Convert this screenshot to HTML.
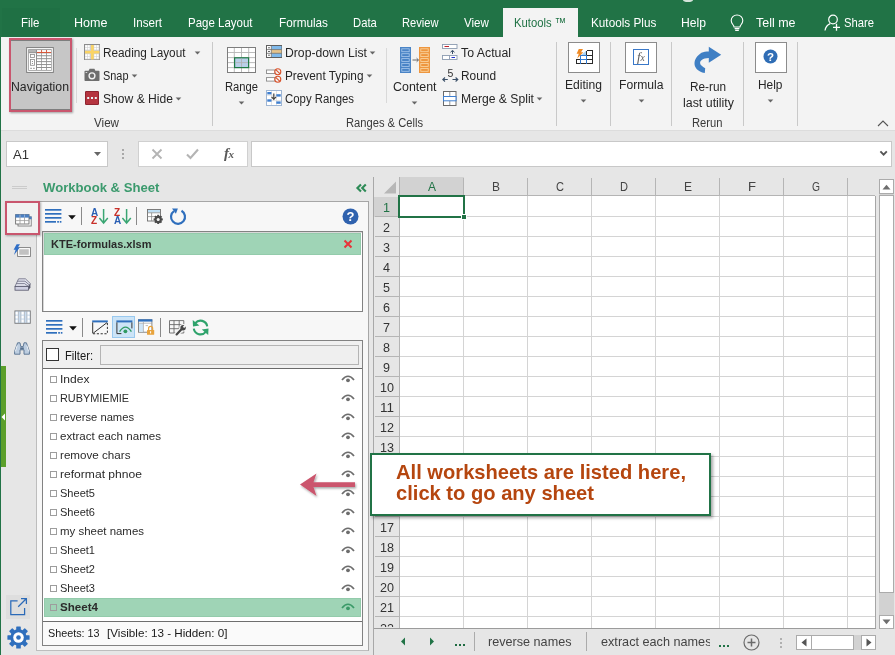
<!DOCTYPE html>
<html><head><meta charset="utf-8"><title>Excel</title>
<style>
html,body{margin:0;padding:0;}
body{width:895px;height:655px;overflow:hidden;background:#e6e6e6;font-family:"Liberation Sans",sans-serif;}
#root{position:relative;width:895px;height:655px;overflow:hidden;background:#e6e6e6;}
#root div,#root svg,#root span{position:absolute;box-sizing:border-box;}
.t{white-space:pre;transform-origin:0 50%;}

</style></head>
<body>
<div id="root">
<!-- ===== header / ribbon backgrounds ===== -->
<div style="left:0;top:0;width:895px;height:37.6px;background:#217346"></div>
<div style="left:2px;top:7.5px;width:58px;height:30.1px;background:#1f7044"></div>
<div style="left:683px;top:-3px;width:10px;height:4.6px;border-radius:50%;background:#d5e3da"></div>
<div style="left:0;top:37px;width:895px;height:94px;background:#f3f3f3;border-bottom:1px solid #dcdcdc"></div>
<div style="left:502.5px;top:7.5px;width:75.5px;height:31px;background:#f3f3f3"></div>
<div style="left:0;top:37px;width:1.3px;height:618px;background:#217346"></div>
<div style="left:1.3px;top:366.2px;width:4.8px;height:100.5px;background:#5b9f2b"></div>
<svg style="left:1px;top:412.6px" width="5" height="8" viewBox="0 0 5 8"><path d="M4 0.5 L0.5 4 L4 7.5Z" fill="#fff"/></svg>

<!-- ribbon separators -->
<div style="left:76px;top:48px;width:1px;height:55px;background:#d9d9d9"></div>
<div style="left:212px;top:42px;width:1px;height:84px;background:#c9c9c9"></div>
<div style="left:386px;top:48px;width:1px;height:55px;background:#d9d9d9"></div>
<div style="left:556px;top:42px;width:1px;height:84px;background:#c9c9c9"></div>
<div style="left:610px;top:42px;width:1px;height:84px;background:#c9c9c9"></div>
<div style="left:671px;top:42px;width:1px;height:84px;background:#c9c9c9"></div>
<div style="left:743px;top:42px;width:1px;height:84px;background:#c9c9c9"></div>
<div style="left:797px;top:42px;width:1px;height:84px;background:#c9c9c9"></div>

<!-- Navigation button -->
<div style="left:9px;top:37.6px;width:63px;height:74px;background:#c6c6c6;border:2px solid #c9566e;box-shadow:1px 1px 2px rgba(0,0,0,.35)"></div>
<div style="left:11px;top:39.6px;width:59px;height:1px;background:#7e7e7e"></div>
<div style="left:11px;top:108.8px;width:59px;height:1px;background:#7e7e7e"></div>
<svg style="left:26px;top:47px" width="28" height="26" viewBox="0 0 28 26">
<rect x="0.65" y="0.6" width="26.7" height="24.8" fill="#fff" stroke="#7a7a7a" stroke-width=".95"/>
<rect x="2.2" y="2.2" width="23.5" height="21.5" fill="#8f8f8f"/>
<rect x="2.9" y="2.9" width="7.1" height="2.4" fill="#b4b4b4"/>
<g fill="#fff"><rect x="11" y="3.1" width="4.2" height="1.9"/><rect x="11" y="6.30" width="4.2" height="1.95"/><rect x="11" y="9.24" width="4.2" height="1.95"/><rect x="11" y="12.18" width="4.2" height="1.95"/><rect x="11" y="15.12" width="4.2" height="1.95"/><rect x="11" y="18.06" width="4.2" height="1.95"/><rect x="11" y="21.00" width="4.2" height="1.95"/><rect x="15.9" y="3.1" width="4.2" height="1.9"/><rect x="15.9" y="6.30" width="4.2" height="1.95"/><rect x="15.9" y="9.24" width="4.2" height="1.95"/><rect x="15.9" y="12.18" width="4.2" height="1.95"/><rect x="15.9" y="15.12" width="4.2" height="1.95"/><rect x="15.9" y="18.06" width="4.2" height="1.95"/><rect x="15.9" y="21.00" width="4.2" height="1.95"/><rect x="20.9" y="3.1" width="4.2" height="1.9"/><rect x="20.9" y="6.30" width="4.2" height="1.95"/><rect x="20.9" y="9.24" width="4.2" height="1.95"/><rect x="20.9" y="12.18" width="4.2" height="1.95"/><rect x="20.9" y="15.12" width="4.2" height="1.95"/><rect x="20.9" y="18.06" width="4.2" height="1.95"/><rect x="20.9" y="21.00" width="4.2" height="1.95"/><rect x="2.9" y="6.2" width="7.1" height="16.8"/></g>
<path d="M10.9 5.45 H25.1" stroke="#e2502f" stroke-width=".9"/>
<path d="M15.55 3 V5.6 M20.5 3 V5.6" stroke="#e2502f" stroke-width=".75"/>
<rect x="4.4" y="7.5" width="4" height="3" fill="#fff" stroke="#8a8a8a" stroke-width=".8"/>
<rect x="4.4" y="12.5" width="4" height="5.8" fill="#fff" stroke="#8a8a8a" stroke-width=".8"/>
<rect x="5.9" y="14" width="1" height="1" fill="#8a8a8a"/><rect x="5.9" y="16" width="1" height="1" fill="#8a8a8a"/>
<path d="M4.2 21.3 H6 M7 21.3 H8.8" stroke="#8a8a8a" stroke-width=".9"/>
</svg>
<svg style="left:84px;top:44px" width="16" height="16" viewBox="0 0 16 16">
<rect x="0.5" y="0.5" width="15.4" height="15.4" fill="#cfcfcf" stroke="#8c8c8c"/>
<g fill="#fff"><rect x="1.2" y="1.2" width="2" height="2"/><rect x="1.2" y="3.7" width="2" height="2"/><rect x="3.7" y="1.2" width="2" height="2"/><rect x="3.7" y="3.7" width="2" height="2"/><rect x="1.2" y="10.2" width="2" height="2"/><rect x="1.2" y="12.7" width="2" height="2"/><rect x="3.7" y="10.2" width="2" height="2"/><rect x="3.7" y="12.7" width="2" height="2"/><rect x="10.2" y="1.2" width="2" height="2"/><rect x="10.2" y="3.7" width="2" height="2"/><rect x="12.7" y="1.2" width="2" height="2"/><rect x="12.7" y="3.7" width="2" height="2"/><rect x="10.2" y="10.2" width="2" height="2"/><rect x="10.2" y="12.7" width="2" height="2"/><rect x="12.7" y="10.2" width="2" height="2"/><rect x="12.7" y="12.7" width="2" height="2"/></g>
<rect x="7.05" y="1" width="2.7" height="14.4" fill="#fad466"/>
<rect x="1" y="6.85" width="14.4" height="2.6" fill="#fad466"/>
</svg>
<svg style="left:84px;top:68px" width="16" height="14" viewBox="0 0 16 14">
<path d="M0.5 3.5 Q0.5 2.8 1.2 2.8 H4.6 L5.6 0.8 H10.4 L11.4 2.8 H14.8 Q15.5 2.8 15.5 3.5 V12.3 Q15.5 13 14.8 13 H1.2 Q0.5 13 0.5 12.3Z" fill="#6e6e6e"/>
<circle cx="8" cy="7.8" r="3.6" fill="#f3f3f3"/><circle cx="8" cy="7.8" r="2.2" fill="#6e6e6e"/>
<rect x="1.6" y="4" width="1.6" height="1" fill="#d8d8d8"/>
</svg>
<svg style="left:85px;top:91px" width="14" height="14" viewBox="0 0 14 14">
<rect x="0.5" y="0.5" width="13" height="13" rx=".3" fill="#b5343f" stroke="#8e2430"/>
<rect x="2.2" y="6" width="2" height="2" fill="#e8f6f8"/><rect x="6" y="6" width="2" height="2" fill="#e8f6f8"/><rect x="9.8" y="6" width="2" height="2" fill="#e8f6f8"/>
</svg>
<svg style="left:193.5px;top:50.5px" width="7" height="4" viewBox="0 0 7 4"><path d="M0.7 0.4 H6.3 L3.5 3.5Z" fill="#666"/></svg>
<svg style="left:131.0px;top:73.5px" width="7" height="4" viewBox="0 0 7 4"><path d="M0.7 0.4 H6.3 L3.5 3.5Z" fill="#666"/></svg>
<svg style="left:175.0px;top:96.5px" width="7" height="4" viewBox="0 0 7 4"><path d="M0.7 0.4 H6.3 L3.5 3.5Z" fill="#666"/></svg>
<svg style="left:227px;top:47px" width="29" height="26" viewBox="0 0 29 26">
<rect x="0.5" y="0.5" width="28" height="25" fill="#fff" stroke="#7d7d7d"/>
<path d="M7.3 1 V25 M14.5 1 V25 M21.7 1 V25 M1 5.5 H28 M1 10.6 H28 M1 15.6 H28 M1 20.6 H28" stroke="#b4b4b4" stroke-width=".9"/>
<rect x="7.6" y="10.8" width="14" height="9.8" fill="#b9cfe9" stroke="#1f7a45" stroke-width="1.2"/>
<path d="M14.5 11.5 V20 M8.3 15.6 H21" stroke="#b0b0b0" stroke-width=".8"/>
</svg>
<svg style="left:238.0px;top:100.5px" width="7" height="4" viewBox="0 0 7 4"><path d="M0.7 0.4 H6.3 L3.5 3.5Z" fill="#666"/></svg>
<svg style="left:266px;top:45px" width="16" height="13" viewBox="0 0 16 13">
<rect x="0.5" y="0.5" width="15" height="12" fill="#fff" stroke="#5f5f5f"/>
<rect x="5.5" y="1" width="10" height="3.6" fill="#7fb9ea"/><rect x="5.5" y="4.7" width="10" height="3.6" fill="#e5c48c"/><rect x="5.5" y="8.4" width="10" height="3.6" fill="#7fb9ea"/>
<path d="M5.3 1 V12 M1 4.6 H15 M1 8.3 H15" stroke="#6a6a6a" stroke-width=".8"/>
<path d="M2.2 2.8 H3.8 M2.2 6.5 H3.8 M2.2 10.2 H3.8" stroke="#444" stroke-width="1"/>
</svg>
<svg style="left:369.0px;top:50.5px" width="7" height="4" viewBox="0 0 7 4"><path d="M0.7 0.4 H6.3 L3.5 3.5Z" fill="#666"/></svg>
<svg style="left:266px;top:68px" width="17" height="15" viewBox="0 0 17 15">
<rect x="0.5" y="2" width="8.5" height="3.5" fill="#fff" stroke="#8a8a8a" stroke-width=".9"/>
<rect x="0.5" y="9.6" width="8.5" height="3.5" fill="#fff" stroke="#8a8a8a" stroke-width=".9"/>
<circle cx="11.8" cy="3.7" r="3" fill="#f3f3f3" stroke="#d9532c" stroke-width="1.1"/><path d="M9.7 1.7 L13.9 5.7" stroke="#d9532c" stroke-width="1.1"/>
<circle cx="11.8" cy="11.3" r="3" fill="#f3f3f3" stroke="#d9532c" stroke-width="1.1"/><path d="M9.7 9.3 L13.9 13.3" stroke="#d9532c" stroke-width="1.1"/>
</svg>
<svg style="left:366.0px;top:73.5px" width="7" height="4" viewBox="0 0 7 4"><path d="M0.7 0.4 H6.3 L3.5 3.5Z" fill="#666"/></svg>
<svg style="left:266px;top:90px" width="16" height="16" viewBox="0 0 16 16">
<rect x="0.5" y="0.5" width="15" height="15" fill="#fff" stroke="#9fb6d4"/>
<path d="M1 5.3 H15 M1 10.6 H15 M5.5 1 V15 M10.5 1 V15" stroke="#d8d8d8" stroke-width=".7"/>
<rect x="1.3" y="2" width="4.2" height="2.4" fill="#3f7fd0"/><rect x="10.3" y="4.2" width="4.4" height="2.4" fill="#3f7fd0"/>
<rect x="1.3" y="9.3" width="4.2" height="2.4" fill="#3f7fd0"/><rect x="10.3" y="11.4" width="4.4" height="2.4" fill="#3f7fd0"/>
<path d="M7.8 3.5 V8.6 M5.6 6.8 L7.8 9.4 L10 6.8" stroke="#444" stroke-width="1.2" fill="none"/>
</svg>
<svg style="left:400px;top:47px" width="11" height="26" viewBox="0 0 11 26"><rect width="11" height="26" fill="#4a84c6"/><rect x="1.8" y="1.8" width="7.4" height="2.9" fill="none" stroke="#a8c8ec" stroke-width=".8"/><rect x="1.8" y="6.7" width="7.4" height="2.9" fill="none" stroke="#a8c8ec" stroke-width=".8"/><rect x="1.8" y="11.600000000000001" width="7.4" height="2.9" fill="none" stroke="#a8c8ec" stroke-width=".8"/><rect x="1.8" y="16.5" width="7.4" height="2.9" fill="none" stroke="#a8c8ec" stroke-width=".8"/><rect x="1.8" y="21.400000000000002" width="7.4" height="2.9" fill="none" stroke="#a8c8ec" stroke-width=".8"/></svg>
<svg style="left:419px;top:47px" width="11" height="26" viewBox="0 0 11 26"><rect width="11" height="26" fill="#ee963f"/><rect x="1.8" y="1.8" width="7.4" height="2.9" fill="none" stroke="#fad7a6" stroke-width=".8"/><rect x="1.8" y="6.7" width="7.4" height="2.9" fill="none" stroke="#fad7a6" stroke-width=".8"/><rect x="1.8" y="11.600000000000001" width="7.4" height="2.9" fill="none" stroke="#fad7a6" stroke-width=".8"/><rect x="1.8" y="16.5" width="7.4" height="2.9" fill="none" stroke="#fad7a6" stroke-width=".8"/><rect x="1.8" y="21.400000000000002" width="7.4" height="2.9" fill="none" stroke="#fad7a6" stroke-width=".8"/></svg>
<svg style="left:411.5px;top:56.5px" width="8" height="6" viewBox="0 0 8 6"><path d="M0.5 3 H6.3 M4.6 1.2 L6.5 3 L4.6 4.8" stroke="#444" stroke-width=".8" fill="none"/></svg>
<svg style="left:411.0px;top:100.5px" width="7" height="4" viewBox="0 0 7 4"><path d="M0.7 0.4 H6.3 L3.5 3.5Z" fill="#666"/></svg>
<svg style="left:442px;top:44px" width="16" height="16" viewBox="0 0 16 16">
<rect x="0.5" y="0.5" width="14.5" height="4" fill="#fff" stroke="#8c9bb0" stroke-width=".9"/>
<path d="M2.5 2.5 H7" stroke="#c0202a" stroke-width="1"/>
<path d="M10.5 10 V6.8 M8.6 8.4 L10.5 6.2 L12.4 8.4" stroke="#3b5068" stroke-width="1" fill="none"/>
<rect x="0.5" y="11.5" width="14.5" height="4" fill="#fff" stroke="#8c9bb0" stroke-width=".9"/>
<path d="M7.5 11.5 V15.5" stroke="#8c9bb0" stroke-width=".9"/><path d="M9.5 13.5 H13" stroke="#2030d0" stroke-width="1"/>
</svg>
<svg style="left:442px;top:68px;will-change:transform" width="17" height="15" viewBox="0 0 17 15">
<text x="5.6" y="9.4" font-family="Liberation Sans" font-size="10.5" fill="#333">5</text>
<path d="M0.8 11.5 H5.8 M3 9.5 L0.8 11.5 L3 13.5 M10.5 11.5 H15.8 M13.6 9.5 L15.8 11.5 L13.6 13.5" stroke="#3b5068" stroke-width="1.1" fill="none"/>
</svg>
<svg style="left:443px;top:91px" width="14" height="15" viewBox="0 0 14 15">
<rect x="0.5" y="0.5" width="12.5" height="14" fill="#fff" stroke="#6a6a6a"/>
<path d="M6.8 1 V5.5 M6.8 10 V14" stroke="#8a8a8a" stroke-width=".9"/>
<rect x="0.5" y="5.5" width="12.5" height="4.3" fill="#fff" stroke="#3f7fd0" stroke-width="1"/>
</svg>
<svg style="left:535.5px;top:96.5px" width="7" height="4" viewBox="0 0 7 4"><path d="M0.7 0.4 H6.3 L3.5 3.5Z" fill="#666"/></svg>
<div style="left:568px;top:42px;width:32px;height:31px;background:#fff;border:1px solid #8c8c8c"></div>
<svg style="left:576px;top:49px" width="17" height="16" viewBox="0 0 17 16">
<path d="M4.5 6.5 L10.5 1.5 V6.5Z" fill="#a9d2f2"/>
<path d="M10.5 1.5 H16 V14.5 H0.5 V10.5 H4.5 M10.5 6 H16 M10.5 10.5 H16 M10.5 1.5 V5.5" stroke="#2a2a2a" stroke-width="1" fill="none" shape-rendering="crispEdges"/>
<path d="M4.5 6 H10.5 V14.5 M4.5 6 V14.5 M4.5 10.5 H10.5" stroke="#2f79d0" stroke-width="1" fill="none" shape-rendering="crispEdges"/>
<path d="M2.8 0 H7 L5 3.2 H7.4 L1.2 9.4 L2.8 4.8 H0.6Z" fill="#f08a24"/>
</svg>
<svg style="left:580.0px;top:98.5px" width="7" height="4" viewBox="0 0 7 4"><path d="M0.7 0.4 H6.3 L3.5 3.5Z" fill="#666"/></svg>
<div style="left:625px;top:42px;width:32px;height:31px;background:#fff;border:1px solid #8c8c8c"></div>
<div style="left:633px;top:49.3px;width:15.7px;height:15.4px;background:#fff;border:1px solid #3a78c8"></div>
<svg style="left:635px;top:49px;filter:grayscale(1)" width="14" height="16" viewBox="0 0 14 16"><text x="2" y="11.5" font-family="Liberation Serif" font-style="italic" font-size="13" fill="#5a5a5a">f</text><text x="5.6" y="11.5" font-family="Liberation Serif" font-style="italic" font-size="9.5" fill="#5a5a5a">x</text></svg>
<svg style="left:638.0px;top:98.5px" width="7" height="4" viewBox="0 0 7 4"><path d="M0.7 0.4 H6.3 L3.5 3.5Z" fill="#666"/></svg>
<svg style="left:694px;top:46px" width="28" height="28" viewBox="0 0 28 28">
<path d="M14.8 0.7 L27.2 8.8 L14.8 16.8 L14.8 12.1 C11.5 12.3 9.5 12.8 8.1 13.7 C6.6 14.7 6.1 15.8 6.1 16.8 C6.1 18 6.6 18.9 7.45 19.5 C8.5 20.6 9.8 21.5 11.2 22.2 L10.8 27.1 C8.8 26.7 7.4 26.2 6.1 25.5 C4.4 24.6 3 23.5 2.1 22.2 C1 20.8 0.5 19.2 0.5 17.5 C0.5 15.5 1.1 13.7 2.1 12.1 C3.3 10 5.2 8.2 7.45 6.75 C9.5 5.8 12 5.4 14.8 5.4Z" fill="#3f7fc4"/>
</svg>
<div style="left:755px;top:42px;width:32px;height:31px;background:#fff;border:1px solid #8c8c8c"></div>
<svg style="left:763.4px;top:49px;will-change:transform" width="15" height="15" viewBox="0 0 15 15"><circle cx="7.5" cy="7.5" r="7" fill="#2f6db5"/><text x="7.5" y="11.6" text-anchor="middle" font-family="Liberation Sans" font-weight="bold" font-size="11.5" fill="#fff">?</text></svg>
<svg style="left:767.0px;top:98.5px" width="7" height="4" viewBox="0 0 7 4"><path d="M0.7 0.4 H6.3 L3.5 3.5Z" fill="#666"/></svg>
<svg style="left:877px;top:119.5px" width="12" height="7" viewBox="0 0 12 7"><path d="M1 6 L6 1 L11 6" stroke="#555" stroke-width="1.1" fill="none"/></svg>
<svg style="left:730px;top:14px" width="14" height="18" viewBox="0 0 14 18">
<path d="M7 1 C3.6 1 1.2 3.5 1.2 6.6 C1.2 9 2.8 10.2 3.6 11.6 L4 13 H10 L10.4 11.6 C11.2 10.2 12.8 9 12.8 6.6 C12.8 3.5 10.4 1 7 1Z" fill="none" stroke="#fff" stroke-width="1.1"/>
<path d="M4.6 14.6 H9.4 M5.2 16.4 H8.8" stroke="#fff" stroke-width="1.1"/></svg>
<svg style="left:824px;top:14px" width="17" height="18" viewBox="0 0 17 18">
<circle cx="9" cy="5.5" r="4.3" fill="none" stroke="#fff" stroke-width="1.2"/>
<path d="M1 16.5 C1.6 12.8 3.6 10.6 6.2 9.6" fill="none" stroke="#fff" stroke-width="1.2"/>
<path d="M12.5 9.8 V16.8 M9 13.3 H16" stroke="#fff" stroke-width="1.3"/></svg>

<!-- ===== formula bar ===== -->
<div style="left:6px;top:141px;width:101.5px;height:25.5px;background:#fff;border:1px solid #c8c8c8"></div>
<svg style="left:93px;top:151px" width="9" height="6" viewBox="0 0 9 6"><path d="M1 1 L8 1 L4.5 5Z" fill="#666"/></svg>
<div style="left:122px;top:149px;width:2px;height:2px;background:#a8a8a8"></div>
<div style="left:122px;top:153px;width:2px;height:2px;background:#a8a8a8"></div>
<div style="left:122px;top:157px;width:2px;height:2px;background:#a8a8a8"></div>
<div style="left:137.5px;top:141px;width:110px;height:25.5px;background:#fff;border:1px solid #d0d0d0"></div>
<svg style="left:150px;top:147px" width="14" height="14" viewBox="0 0 14 14"><path d="M2.5 2.5 L11.5 11.5 M11.5 2.5 L2.5 11.5" stroke="#b4b4b4" stroke-width="1.8" fill="none"/></svg>
<svg style="left:185px;top:147px" width="15" height="14" viewBox="0 0 15 14"><path d="M2 7.5 L5.5 11 L13 2.5" stroke="#b4b4b4" stroke-width="2.1" fill="none"/></svg>
<svg style="left:222px;top:145px;filter:grayscale(1)" width="16" height="18" viewBox="0 0 16 18"><text x="2" y="12.8" font-family="Liberation Serif" font-style="italic" font-weight="bold" font-size="15" fill="#5a5a5a">f</text><text x="6.6" y="12.8" font-family="Liberation Serif" font-style="italic" font-weight="bold" font-size="11" fill="#5a5a5a">x</text></svg>
<div style="left:250.5px;top:141px;width:641px;height:25.5px;background:#fff;border:1px solid #c8c8c8"></div>
<svg style="left:879px;top:150px" width="10" height="7" viewBox="0 0 10 7"><path d="M1.4 1.4 L4.6 4.6 L7.8 1.4" stroke="#555" stroke-width="1.9" fill="none"/></svg>


<!-- ===== Kutools pane ===== -->
<div style="left:12px;top:185.7px;width:15px;height:1px;background:#cbcbcb"></div>
<div style="left:12px;top:188.2px;width:15px;height:1px;background:#cbcbcb"></div>
<div style="left:35.8px;top:201px;width:333.2px;height:449.5px;background:#f7f7f7;border:1px solid #a6a6a6;border-left-color:#bdbdbd;border-bottom-color:#bdbdbd"></div>
<svg style="left:355px;top:183px" width="12" height="10" viewBox="0 0 12 10"><path d="M6 1.4 L2.4 5 L6 8.6 M10.8 1.4 L7.2 5 L10.8 8.6" stroke="#2e8b57" stroke-width="2.1" fill="none"/></svg>
<!-- selected side icon -->
<div style="left:5.2px;top:201.3px;width:34.6px;height:33.3px;background:#f1f1f1;border:2px solid #c9566e;box-shadow:1px 1px 2px rgba(0,0,0,.3)"></div>
<svg style="left:14.5px;top:213.5px" width="17" height="13" viewBox="0 0 17 13">
<rect x="3" y="2.8" width="13.2" height="9.2" fill="#fff" stroke="#7a7a7a" stroke-width=".9"/>
<rect x="14" y="2.6" width="2.6" height="2.6" fill="#4a7fc2"/>
<rect x="0.6" y="0.6" width="13.4" height="9.4" fill="#fff" stroke="#6e6e6e" stroke-width=".9"/>
<rect x="0.4" y="0.4" width="13.8" height="3.2" fill="#4a7fc2"/>
<path d="M5 0.6 V10 M9.5 0.6 V10 M0.6 6.6 H14" stroke="#9a9a9a" stroke-width=".8"/>
<path d="M5 0.6 V3.4 M9.5 0.6 V3.4" stroke="#8fb3e0" stroke-width=".8"/>
</svg>
<svg style="left:12.5px;top:244px" width="18" height="13" viewBox="0 0 18 13">
<rect x="4.6" y="3.6" width="12.8" height="8.8" fill="#fff" stroke="#7a7a7a" stroke-width=".9"/>
<rect x="6.2" y="5.2" width="9.6" height="5.6" fill="#c2c2c2"/>
<path d="M3.6 0.3 H7 L4.8 3.6 H6.8 L1 11 L2.6 5.8 H0.6Z" fill="#2f6fc8"/>
</svg>
<svg style="left:13.5px;top:277.5px" width="17" height="13" viewBox="0 0 17 13">
<path d="M4.6 0.8 H11.4 L16.4 5.6 L14.4 8.4 H1Z" fill="#e2e3ee" stroke="#6a6b80" stroke-width=".8"/>
<path d="M3.4 3.2 H11 L15.4 7 M2.2 5.6 H10.6 L14.4 8.4" stroke="#6a6b80" stroke-width=".8" fill="none"/>
<path d="M14.4 8.4 L16.4 5.6 V9.6 L14.4 12.2Z" fill="#55566a"/>
<rect x="1" y="8.4" width="13.4" height="3.8" fill="#cfd0e2" stroke="#55566a" stroke-width=".8"/>
</svg>
<svg style="left:13.5px;top:309.5px" width="17" height="14" viewBox="0 0 17 14">
<rect x="0.9" y="0.9" width="15.4" height="12.4" fill="#c9dcf0" stroke="#7a7a7a" stroke-width=".9"/>
<g fill="#fff"><rect x="1.6" y="1.8" width="2.2" height="2.8"/><rect x="1.6" y="5.7" width="2.2" height="2.8"/><rect x="1.6" y="9.6" width="2.2" height="2.8"/>
<rect x="7.4" y="1.8" width="2.4" height="2.8"/><rect x="7.4" y="5.7" width="2.4" height="2.8"/><rect x="7.4" y="9.6" width="2.4" height="2.8"/>
<rect x="13.4" y="1.8" width="2.2" height="2.8"/><rect x="13.4" y="5.7" width="2.2" height="2.8"/><rect x="13.4" y="9.6" width="2.2" height="2.8"/></g>
<path d="M4.4 1 V13 M6.8 1 V13 M10.4 1 V13 M12.8 1 V13" stroke="#a9a9a9" stroke-width=".6"/>
</svg>
<svg style="left:13.5px;top:341.5px" width="16" height="13" viewBox="0 0 16 13">
<path d="M3.6 0.8 H6 L6.8 4.6 H9.2 L10 0.8 H12.4 L15.4 9.4 V12.2 H10 V7.8 H6 V12.2 H0.6 V9.4Z" fill="#bccde0" stroke="#56708e" stroke-width=".9"/>
<path d="M3.2 3.4 L1.4 9.4 M12.8 3.4 L14.6 9.4" stroke="#eaf0f7" stroke-width="1"/>
<path d="M6.2 5.4 H9.8 V7.4 H6.2Z" fill="#56708e"/>
</svg>
<!-- toolbar 1 -->
<svg style="left:45px;top:209px" width="17" height="14" viewBox="0 0 17 14"><rect x="0" y="0" width="16.4" height="1.7" fill="#2f6fbd"/><rect x="0" y="4" width="16.4" height="1.7" fill="#2f6fbd"/><rect x="0" y="8" width="16.4" height="1.7" fill="#2f6fbd"/><rect x="0" y="12" width="11" height="1.7" fill="#2f6fbd"/><rect x="12.2" y="12" width="1.7" height="1.7" fill="#2f6fbd"/><rect x="14.8" y="12" width="1.6" height="1.7" fill="#2f6fbd"/></svg>
<svg style="left:67.6px;top:214.6px" width="8" height="5" viewBox="0 0 8 5"><path d="M0.2 0.3 H7.8 L4 4.6Z" fill="#111"/></svg>
<div style="left:81px;top:207px;width:1px;height:18px;background:#8a8a8a"></div>
<svg style="left:90.8px;top:208px;will-change:transform" width="18" height="17" viewBox="0 0 18 17">
<text x="0" y="7.5" font-family="Liberation Sans" font-weight="bold" font-size="10" fill="#2a5fb4">A</text>
<text x="0" y="15.7" font-family="Liberation Sans" font-weight="bold" font-size="10" fill="#c8302a">Z</text>
<path d="M12.6 1 V14.4 M8.4 10 L12.6 15 L16.8 10" stroke="#3aa673" stroke-width="1.5" fill="none"/></svg>
<svg style="left:113.8px;top:208px;will-change:transform" width="18" height="17" viewBox="0 0 18 17">
<text x="0" y="7.5" font-family="Liberation Sans" font-weight="bold" font-size="10" fill="#c8302a">Z</text>
<text x="0" y="15.7" font-family="Liberation Sans" font-weight="bold" font-size="10" fill="#2a5fb4">A</text>
<path d="M12.6 1 V14.4 M8.4 10 L12.6 15 L16.8 10" stroke="#3aa673" stroke-width="1.5" fill="none"/></svg>
<div style="left:136px;top:207px;width:1px;height:18px;background:#8a8a8a"></div>
<svg style="left:147px;top:209px" width="16" height="15" viewBox="0 0 16 15">
<rect x="0.5" y="0.5" width="13" height="11.5" fill="#fff" stroke="#6e6e6e" stroke-width=".9"/>
<rect x="1" y="1" width="12" height="2.6" fill="#bfe0f6"/>
<path d="M0.5 3.8 H13.5 M0.5 7.6 H9 M4.6 3.8 V12" stroke="#8a8a8a" stroke-width=".8"/>
<g transform="translate(11.2,10.4)"><circle r="3.6" fill="#4a4a4a"/><g fill="#4a4a4a"><rect x="-1" y="-4.6" width="2" height="9.2"/><rect x="-4.6" y="-1" width="9.2" height="2"/><rect x="-1" y="-4.6" width="2" height="9.2" transform="rotate(45)"/><rect x="-1" y="-4.6" width="2" height="9.2" transform="rotate(-45)"/></g><circle r="1.5" fill="#f7f7f7"/></g>
</svg>
<svg style="left:169px;top:207.5px" width="18" height="18" viewBox="0 0 18 18">
<path d="M12.5 2.74 A7 7 0 1 1 5 3.07" fill="none" stroke="#2f6fbd" stroke-width="2.2"/>
<path d="M3 0.5 L6.9 5.8 L8.9 0.5Z" fill="#2f6fbd"/></svg>
<svg style="left:342.2px;top:207.8px;will-change:transform" width="17" height="17" viewBox="0 0 17 17"><circle cx="8.5" cy="8.5" r="8" fill="#2f62ae"/><text x="8.5" y="13.2" text-anchor="middle" font-family="Liberation Sans" font-weight="bold" font-size="13" fill="#fff">?</text></svg>
<!-- workbook list -->
<div style="left:42px;top:231px;width:321px;height:80.5px;background:#fff;border:1px solid #828282;box-shadow:inset 1px 1px 0 #d8d8d8"></div>
<div style="left:44px;top:233.3px;width:316.8px;height:21.5px;background:#9fd4b6;border:1px solid #93cbab"></div>
<svg style="left:342.8px;top:238.8px" width="10" height="10" viewBox="0 0 10 10"><path d="M1.5 1.5 L8.5 8.5 M8.5 1.5 L1.5 8.5" stroke="#e8343a" stroke-width="2" fill="none"/></svg>
<!-- toolbar 2 -->
<svg style="left:45.6px;top:320.2px" width="17" height="14" viewBox="0 0 17 14"><rect x="0" y="0" width="16.4" height="1.7" fill="#2f6fbd"/><rect x="0" y="4" width="16.4" height="1.7" fill="#2f6fbd"/><rect x="0" y="8" width="16.4" height="1.7" fill="#2f6fbd"/><rect x="0" y="12" width="11" height="1.7" fill="#2f6fbd"/><rect x="12.2" y="12" width="1.7" height="1.7" fill="#2f6fbd"/><rect x="14.8" y="12" width="1.6" height="1.7" fill="#2f6fbd"/></svg>
<svg style="left:68.6px;top:325.6px" width="8" height="5" viewBox="0 0 8 5"><path d="M0.2 0.3 H7.8 L4 4.6Z" fill="#111"/></svg>
<div style="left:82px;top:318px;width:1px;height:18.5px;background:#8a8a8a"></div>
<svg style="left:92px;top:319.5px" width="17" height="15" viewBox="0 0 17 15">
<path d="M0.2 1.4 H15.8" stroke="#2f6fbd" stroke-width="2"/>
<path d="M0.7 2.4 V13.4" stroke="#333" stroke-width="1"/>
<path d="M15.4 3 V13.6" stroke="#333" stroke-width="1" stroke-dasharray="2.2 1.6"/>
<path d="M1 13.7 H15.6" stroke="#333" stroke-width="1.1" stroke-dasharray="2.2 1.6"/>
<path d="M1.2 13.2 L15 2.6" stroke="#333" stroke-width="1"/></svg>
<div style="left:112px;top:315.6px;width:23px;height:22px;background:#cce4f7;border:1px solid #99c9ef"></div>
<svg style="left:115.5px;top:319.5px" width="17" height="15" viewBox="0 0 17 15">
<path d="M0.4 1.4 H16.4" stroke="#2f6fbd" stroke-width="2"/>
<path d="M0.9 2.4 V13.6 H5.4" stroke="#333" stroke-width="1" fill="none"/>
<path d="M15.9 2.4 V8.4" stroke="#333" stroke-width="1"/>
<path d="M3.6 11.6 Q9.5 2.6 15.4 11.6" stroke="#2f9a62" stroke-width="1.4" fill="none"/><circle cx="9.4" cy="11.3" r="1.9" fill="#2f9a62"/></svg>
<svg style="left:138px;top:319px" width="17" height="17" viewBox="0 0 17 17">
<rect x="0.5" y="0.8" width="13.4" height="12.4" fill="#fff" stroke="#7a7a7a" stroke-width=".9"/>
<rect x="0.1" y="0.3" width="14.2" height="2.3" fill="#2f6fbd"/>
<rect x="1" y="4.4" width="4.2" height="8.4" fill="#cfe6f8"/>
<path d="M5.4 3 V13 M0.6 4.2 H13.8 M7.6 6.6 H10" stroke="#a0a0a0" stroke-width=".7"/>
<path d="M10.6 11.4 V9.4 A2 2 0 0 1 14.6 9.4 V11.4" fill="none" stroke="#e8a33d" stroke-width="1.3"/>
<rect x="9" y="11" width="7.2" height="4.8" rx=".5" fill="#e8a33d"/><rect x="12.1" y="12.2" width="1" height="2.2" fill="#fff"/></svg>
<div style="left:160px;top:318px;width:1px;height:18.5px;background:#8a8a8a"></div>
<svg style="left:168.8px;top:319.8px" width="18" height="16" viewBox="0 0 18 16">
<path d="M0.5 0.6 H14.8 V13 H0.5Z M0.5 4.6 H14.8 M0.5 8.7 H14.8 M5 0.6 V13 M10.2 0.6 V13" stroke="#6a6a6a" stroke-width=".9" fill="none"/>
<path d="M7.6 14.4 L13.4 8.4" stroke="#f7f7f7" stroke-width="4.6" stroke-linecap="round"/><circle cx="14.1" cy="7.7" r="3.7" fill="#f7f7f7"/>
<path d="M7.6 14.4 L13.2 8.6" stroke="#484848" stroke-width="2.2" stroke-linecap="round"/><circle cx="14.1" cy="7.7" r="2.7" fill="#484848"/>
<path d="M14.5 7.3 L17.4 4.4" stroke="#f7f7f7" stroke-width="1.9"/></svg>
<svg style="left:191.5px;top:318.5px" width="18" height="18" viewBox="0 0 18 18">
<path d="M3.3 4.2 A6.7 6.7 0 0 1 15.2 7.4" fill="none" stroke="#2fa36c" stroke-width="2.1"/>
<path d="M13.7 12.8 A6.7 6.7 0 0 1 1.8 9.7" fill="none" stroke="#2fa36c" stroke-width="2.1"/>
<path d="M0.7 0.9 L1 7.4 L7.4 6.5Z" fill="#2fa36c"/><path d="M16.5 9.5 L16.2 16 L9.8 10.5Z" fill="#2fa36c"/></svg>
<!-- filter + list box -->
<div style="left:42px;top:340px;width:321px;height:305.5px;background:#fff;border:1px solid #828282"></div>
<div style="left:43px;top:341px;width:319px;height:27.6px;background:#f0f0f0;border-bottom:1.2px solid #6a6a6a"></div>
<div style="left:46px;top:348px;width:13px;height:13px;background:#fff;border:1px solid #333"></div>
<div style="left:100px;top:344.5px;width:258.5px;height:20px;background:#efefef;border:1px solid #b4b4b4"></div>
<div style="left:44px;top:597.6px;width:316.8px;height:19.2px;background:#9fd4b6;border:1px solid #93cbab"></div>
<div style="left:43px;top:620.5px;width:319px;height:1px;background:#6e6e6e"></div>
<div style="left:43px;top:621.5px;width:319px;height:23px;background:#fafafa"></div>
<div style="left:50px;top:375.5px;width:7px;height:7px;border:1px solid #9d9d9d"></div>
<svg style="left:341px;top:374px" width="14" height="10" viewBox="0 0 14 10"><path d="M1 6 Q7 -1.5 13 6" stroke="#6d6d6d" stroke-width="1.7" fill="none"/><circle cx="7" cy="6.3" r="1.9" fill="#6d6d6d"/></svg>
<div style="left:50px;top:394.5px;width:7px;height:7px;border:1px solid #9d9d9d"></div>
<svg style="left:341px;top:393px" width="14" height="10" viewBox="0 0 14 10"><path d="M1 6 Q7 -1.5 13 6" stroke="#6d6d6d" stroke-width="1.7" fill="none"/><circle cx="7" cy="6.3" r="1.9" fill="#6d6d6d"/></svg>
<div style="left:50px;top:413.5px;width:7px;height:7px;border:1px solid #9d9d9d"></div>
<svg style="left:341px;top:412px" width="14" height="10" viewBox="0 0 14 10"><path d="M1 6 Q7 -1.5 13 6" stroke="#6d6d6d" stroke-width="1.7" fill="none"/><circle cx="7" cy="6.3" r="1.9" fill="#6d6d6d"/></svg>
<div style="left:50px;top:432.5px;width:7px;height:7px;border:1px solid #9d9d9d"></div>
<svg style="left:341px;top:431px" width="14" height="10" viewBox="0 0 14 10"><path d="M1 6 Q7 -1.5 13 6" stroke="#6d6d6d" stroke-width="1.7" fill="none"/><circle cx="7" cy="6.3" r="1.9" fill="#6d6d6d"/></svg>
<div style="left:50px;top:451.5px;width:7px;height:7px;border:1px solid #9d9d9d"></div>
<svg style="left:341px;top:450px" width="14" height="10" viewBox="0 0 14 10"><path d="M1 6 Q7 -1.5 13 6" stroke="#6d6d6d" stroke-width="1.7" fill="none"/><circle cx="7" cy="6.3" r="1.9" fill="#6d6d6d"/></svg>
<div style="left:50px;top:470.5px;width:7px;height:7px;border:1px solid #9d9d9d"></div>
<svg style="left:341px;top:469px" width="14" height="10" viewBox="0 0 14 10"><path d="M1 6 Q7 -1.5 13 6" stroke="#6d6d6d" stroke-width="1.7" fill="none"/><circle cx="7" cy="6.3" r="1.9" fill="#6d6d6d"/></svg>
<div style="left:50px;top:489.5px;width:7px;height:7px;border:1px solid #9d9d9d"></div>
<svg style="left:341px;top:488px" width="14" height="10" viewBox="0 0 14 10"><path d="M1 6 Q7 -1.5 13 6" stroke="#6d6d6d" stroke-width="1.7" fill="none"/><circle cx="7" cy="6.3" r="1.9" fill="#6d6d6d"/></svg>
<div style="left:50px;top:508.5px;width:7px;height:7px;border:1px solid #9d9d9d"></div>
<svg style="left:341px;top:507px" width="14" height="10" viewBox="0 0 14 10"><path d="M1 6 Q7 -1.5 13 6" stroke="#6d6d6d" stroke-width="1.7" fill="none"/><circle cx="7" cy="6.3" r="1.9" fill="#6d6d6d"/></svg>
<div style="left:50px;top:527.5px;width:7px;height:7px;border:1px solid #9d9d9d"></div>
<svg style="left:341px;top:526px" width="14" height="10" viewBox="0 0 14 10"><path d="M1 6 Q7 -1.5 13 6" stroke="#6d6d6d" stroke-width="1.7" fill="none"/><circle cx="7" cy="6.3" r="1.9" fill="#6d6d6d"/></svg>
<div style="left:50px;top:546.5px;width:7px;height:7px;border:1px solid #9d9d9d"></div>
<svg style="left:341px;top:545px" width="14" height="10" viewBox="0 0 14 10"><path d="M1 6 Q7 -1.5 13 6" stroke="#6d6d6d" stroke-width="1.7" fill="none"/><circle cx="7" cy="6.3" r="1.9" fill="#6d6d6d"/></svg>
<div style="left:50px;top:565.5px;width:7px;height:7px;border:1px solid #9d9d9d"></div>
<svg style="left:341px;top:564px" width="14" height="10" viewBox="0 0 14 10"><path d="M1 6 Q7 -1.5 13 6" stroke="#6d6d6d" stroke-width="1.7" fill="none"/><circle cx="7" cy="6.3" r="1.9" fill="#6d6d6d"/></svg>
<div style="left:50px;top:584.5px;width:7px;height:7px;border:1px solid #9d9d9d"></div>
<svg style="left:341px;top:583px" width="14" height="10" viewBox="0 0 14 10"><path d="M1 6 Q7 -1.5 13 6" stroke="#6d6d6d" stroke-width="1.7" fill="none"/><circle cx="7" cy="6.3" r="1.9" fill="#6d6d6d"/></svg>
<div style="left:50px;top:603.5px;width:7px;height:7px;border:1px solid #9d9d9d"></div>
<svg style="left:341px;top:602px" width="14" height="10" viewBox="0 0 14 10"><path d="M1 6 Q7 -1.5 13 6" stroke="#3a9a68" stroke-width="1.7" fill="none"/><circle cx="7" cy="6.3" r="1.9" fill="#3a9a68"/></svg>
<!-- bottom-left icons -->
<div style="left:6px;top:595px;width:24px;height:24px;background:#dedede"></div>
<svg style="left:9px;top:597px" width="19" height="19" viewBox="0 0 19 19"><path d="M8.6 3.9 H1.8 V17.6 H15.6 V11" stroke="#2b6ab8" stroke-width="1.25" fill="none"/><path d="M9.2 9.8 L17.2 1.8 M12 1.6 H17.4 V7" stroke="#2b6ab8" stroke-width="1.25" fill="none"/></svg>
<svg style="left:6.9px;top:626px" width="23" height="23" viewBox="-11.5 -11.5 23 23"><g fill="#2f6fbd"><circle r="8.2"/><rect id="gt" x="-2.3" y="-11.1" width="4.6" height="22.2" rx=".6"/><use href="#gt" transform="rotate(45)"/><use href="#gt" transform="rotate(90)"/><use href="#gt" transform="rotate(135)"/></g><circle r="5.3" fill="#fff"/><circle r="2.3" fill="#2f6fbd"/></svg>


<!-- ===== grid ===== -->
<div style="left:372.8px;top:177px;width:1.2px;height:478px;background:#a8a8a8"></div>
<div style="left:374px;top:177px;width:501px;height:451px;background:#fff"></div>
<div style="left:374px;top:177px;width:501px;height:19px;background:#e6e6e6;border-bottom:1px solid #b4b4b4"></div>
<div style="left:374px;top:177px;width:25.5px;height:451px;background:#e6e6e6;border-right:1px solid #b4b4b4"></div>
<div style="left:399.5px;top:177px;width:64.5px;height:19px;background:#d2d2d2"></div>
<div style="left:374px;top:196.5px;width:25px;height:20.5px;background:#d2d2d2"></div>
<svg style="left:383px;top:181px" width="14" height="13" viewBox="0 0 14 13"><path d="M13 0.5 V12.5 H1Z" fill="#b7b7b7"/></svg>
<div style="left:463px;top:178px;width:1px;height:17px;background:#b5b5b5"></div>
<div style="left:463px;top:196px;width:1px;height:432px;background:#d4d4d4"></div>
<div style="left:527px;top:178px;width:1px;height:17px;background:#b5b5b5"></div>
<div style="left:527px;top:196px;width:1px;height:432px;background:#d4d4d4"></div>
<div style="left:591px;top:178px;width:1px;height:17px;background:#b5b5b5"></div>
<div style="left:591px;top:196px;width:1px;height:432px;background:#d4d4d4"></div>
<div style="left:655px;top:178px;width:1px;height:17px;background:#b5b5b5"></div>
<div style="left:655px;top:196px;width:1px;height:432px;background:#d4d4d4"></div>
<div style="left:719px;top:178px;width:1px;height:17px;background:#b5b5b5"></div>
<div style="left:719px;top:196px;width:1px;height:432px;background:#d4d4d4"></div>
<div style="left:783px;top:178px;width:1px;height:17px;background:#b5b5b5"></div>
<div style="left:783px;top:196px;width:1px;height:432px;background:#d4d4d4"></div>
<div style="left:847px;top:178px;width:1px;height:17px;background:#b5b5b5"></div>
<div style="left:847px;top:196px;width:1px;height:432px;background:#d4d4d4"></div>
<div style="left:375px;top:216px;width:24px;height:1px;background:#b5b5b5"></div>
<div style="left:400px;top:216px;width:475px;height:1px;background:#d4d4d4"></div>
<div style="left:375px;top:236px;width:24px;height:1px;background:#b5b5b5"></div>
<div style="left:400px;top:236px;width:475px;height:1px;background:#d4d4d4"></div>
<div style="left:375px;top:256px;width:24px;height:1px;background:#b5b5b5"></div>
<div style="left:400px;top:256px;width:475px;height:1px;background:#d4d4d4"></div>
<div style="left:375px;top:276px;width:24px;height:1px;background:#b5b5b5"></div>
<div style="left:400px;top:276px;width:475px;height:1px;background:#d4d4d4"></div>
<div style="left:375px;top:296px;width:24px;height:1px;background:#b5b5b5"></div>
<div style="left:400px;top:296px;width:475px;height:1px;background:#d4d4d4"></div>
<div style="left:375px;top:316px;width:24px;height:1px;background:#b5b5b5"></div>
<div style="left:400px;top:316px;width:475px;height:1px;background:#d4d4d4"></div>
<div style="left:375px;top:336px;width:24px;height:1px;background:#b5b5b5"></div>
<div style="left:400px;top:336px;width:475px;height:1px;background:#d4d4d4"></div>
<div style="left:375px;top:356px;width:24px;height:1px;background:#b5b5b5"></div>
<div style="left:400px;top:356px;width:475px;height:1px;background:#d4d4d4"></div>
<div style="left:375px;top:376px;width:24px;height:1px;background:#b5b5b5"></div>
<div style="left:400px;top:376px;width:475px;height:1px;background:#d4d4d4"></div>
<div style="left:375px;top:396px;width:24px;height:1px;background:#b5b5b5"></div>
<div style="left:400px;top:396px;width:475px;height:1px;background:#d4d4d4"></div>
<div style="left:375px;top:416px;width:24px;height:1px;background:#b5b5b5"></div>
<div style="left:400px;top:416px;width:475px;height:1px;background:#d4d4d4"></div>
<div style="left:375px;top:436px;width:24px;height:1px;background:#b5b5b5"></div>
<div style="left:400px;top:436px;width:475px;height:1px;background:#d4d4d4"></div>
<div style="left:375px;top:456px;width:24px;height:1px;background:#b5b5b5"></div>
<div style="left:400px;top:456px;width:475px;height:1px;background:#d4d4d4"></div>
<div style="left:375px;top:476px;width:24px;height:1px;background:#b5b5b5"></div>
<div style="left:400px;top:476px;width:475px;height:1px;background:#d4d4d4"></div>
<div style="left:375px;top:496px;width:24px;height:1px;background:#b5b5b5"></div>
<div style="left:400px;top:496px;width:475px;height:1px;background:#d4d4d4"></div>
<div style="left:375px;top:516px;width:24px;height:1px;background:#b5b5b5"></div>
<div style="left:400px;top:516px;width:475px;height:1px;background:#d4d4d4"></div>
<div style="left:375px;top:536px;width:24px;height:1px;background:#b5b5b5"></div>
<div style="left:400px;top:536px;width:475px;height:1px;background:#d4d4d4"></div>
<div style="left:375px;top:556px;width:24px;height:1px;background:#b5b5b5"></div>
<div style="left:400px;top:556px;width:475px;height:1px;background:#d4d4d4"></div>
<div style="left:375px;top:576px;width:24px;height:1px;background:#b5b5b5"></div>
<div style="left:400px;top:576px;width:475px;height:1px;background:#d4d4d4"></div>
<div style="left:375px;top:596px;width:24px;height:1px;background:#b5b5b5"></div>
<div style="left:400px;top:596px;width:475px;height:1px;background:#d4d4d4"></div>
<div style="left:375px;top:616px;width:24px;height:1px;background:#b5b5b5"></div>
<div style="left:400px;top:616px;width:475px;height:1px;background:#d4d4d4"></div>
<div style="left:374px;top:627.5px;width:502px;height:1px;background:#9b9b9b"></div>
<div style="left:875px;top:196px;width:1px;height:432px;background:#a6a6a6"></div>
<span class="t" style="left:379.5px;top:620.7px;height:6.8px;overflow:hidden;font-size:13px;line-height:16px;color:#333;transform:scaleX(0.9676)">22</span>
<div style="left:398.3px;top:195.3px;width:66.9px;height:22.8px;border:2px solid #217346;background:#fff"></div>
<div style="left:461px;top:214px;width:6px;height:6px;background:#217346;border:1px solid #fff"></div>
<div style="left:879px;top:179px;width:14.5px;height:449px;background:#d2d2d2"></div>
<div style="left:879px;top:179px;width:14.5px;height:14.5px;background:#fff;border:1px solid #ababab"></div>
<svg style="left:882px;top:183.5px" width="9" height="6" viewBox="0 0 9 6"><path d="M0.5 5.5 L4.5 0.8 L8.5 5.5Z" fill="#6e6e6e"/></svg>
<div style="left:879px;top:194.5px;width:14.5px;height:398px;background:#fff;border:1px solid #ababab"></div>
<div style="left:879px;top:614.5px;width:14.5px;height:14px;background:#fff;border:1px solid #ababab"></div>
<svg style="left:882px;top:619px" width="9" height="6" viewBox="0 0 9 6"><path d="M0.5 0.5 L4.5 5.2 L8.5 0.5Z" fill="#6e6e6e"/></svg>
<svg style="left:296px;top:470px" width="64" height="30" viewBox="0 0 64 30"><defs><filter id="sh" x="-10%" y="-10%" width="130%" height="140%"><feDropShadow dx="1" dy="1.5" stdDeviation="1" flood-color="#000" flood-opacity=".35"/></filter></defs><path d="M4 14.5 L20.5 3.5 L17.5 12.3 L59 12.3 L59 16.9 L17.5 16.9 L20.5 26 Z" fill="#cb556d" filter="url(#sh)"/></svg>
<div style="left:369.5px;top:453px;width:341px;height:62.5px;background:#fff;border:2px solid #217346;box-shadow:2px 2px 3px rgba(0,0,0,.35)"></div>
<svg style="left:400px;top:637px" width="6" height="9" viewBox="0 0 6 9"><path d="M5 0.5 L1 4.5 L5 8.5Z" fill="#217346"/></svg>
<svg style="left:429px;top:637px" width="6" height="9" viewBox="0 0 6 9"><path d="M1 0.5 L5 4.5 L1 8.5Z" fill="#217346"/></svg>
<div style="left:454.8px;top:644px;width:2px;height:2px;background:#1e6b41"></div>
<div style="left:458.8px;top:644px;width:2px;height:2px;background:#1e6b41"></div>
<div style="left:462.8px;top:644px;width:2px;height:2px;background:#1e6b41"></div>
<div style="left:474px;top:632px;width:1px;height:19px;background:#ababab"></div>
<div style="left:586px;top:632px;width:1px;height:19px;background:#ababab"></div>
<div style="left:710px;top:630px;width:12px;height:24px;background:#e6e6e6;z-index:5"></div>
<div style="left:719px;top:644.5px;width:2px;height:2px;background:#217346;z-index:6"></div>
<div style="left:723px;top:644.5px;width:2px;height:2px;background:#217346;z-index:6"></div>
<div style="left:727px;top:644.5px;width:2px;height:2px;background:#217346;z-index:6"></div>
<svg style="left:742.5px;top:633.5px" width="17" height="17" viewBox="0 0 17 17"><circle cx="8.5" cy="8.5" r="7.5" fill="none" stroke="#6b6b6b" stroke-width="1.2"/><path d="M8.5 4.5 V12.5 M4.5 8.5 H12.5" stroke="#6b6b6b" stroke-width="1.5"/></svg>
<div style="left:779.5px;top:637.5px;width:2px;height:2px;background:#b0b0b0"></div>
<div style="left:779.5px;top:641.5px;width:2px;height:2px;background:#b0b0b0"></div>
<div style="left:779.5px;top:645.5px;width:2px;height:2px;background:#b0b0b0"></div>
<div style="left:796px;top:635px;width:80px;height:14.5px;background:#d2d2d2"></div>
<div style="left:796px;top:635px;width:15.5px;height:14.5px;background:#fff;border:1px solid #ababab"></div>
<svg style="left:800.5px;top:638px" width="6" height="9" viewBox="0 0 6 9"><path d="M5.5 0.5 L0.5 4.5 L5.5 8.5Z" fill="#555"/></svg>
<div style="left:811px;top:635px;width:43px;height:14.5px;background:#fff;border:1px solid #ababab"></div>
<div style="left:861px;top:635px;width:15px;height:14.5px;background:#fff;border:1px solid #ababab"></div>
<svg style="left:866px;top:638px" width="6" height="9" viewBox="0 0 6 9"><path d="M0.5 0.5 L5.5 4.5 L0.5 8.5Z" fill="#555"/></svg>

<span class="t" style="left:21px;top:14.2px;line-height:18px;font-size:13px;color:#ffffff;transform:scaleX(0.8829);">File</span>
<span class="t" style="left:73.5px;top:14.2px;line-height:18px;font-size:13px;color:#ffffff;transform:scaleX(0.9658);">Home</span>
<span class="t" style="left:132.5px;top:14.2px;line-height:18px;font-size:13px;color:#ffffff;transform:scaleX(0.8919);">Insert</span>
<span class="t" style="left:188px;top:14.2px;line-height:18px;font-size:13px;color:#ffffff;transform:scaleX(0.8834);">Page Layout</span>
<span class="t" style="left:279px;top:14.2px;line-height:18px;font-size:13px;color:#ffffff;transform:scaleX(0.9043);">Formulas</span>
<span class="t" style="left:353px;top:14.2px;line-height:18px;font-size:13px;color:#ffffff;transform:scaleX(0.8664);">Data</span>
<span class="t" style="left:402.3px;top:14.2px;line-height:18px;font-size:13px;color:#ffffff;transform:scaleX(0.8563);">Review</span>
<span class="t" style="left:464.3px;top:14.2px;line-height:18px;font-size:13px;color:#ffffff;transform:scaleX(0.8908);">View</span>
<span class="t" style="left:513.5px;top:14.2px;line-height:18px;font-size:13px;color:#217346;transform:scaleX(0.8669);">Kutools ™</span>
<span class="t" style="left:591px;top:14.2px;line-height:18px;font-size:13px;color:#ffffff;transform:scaleX(0.9036);">Kutools Plus</span>
<span class="t" style="left:681px;top:14.2px;line-height:18px;font-size:13px;color:#ffffff;transform:scaleX(0.9346);">Help</span>
<span class="t" style="left:756px;top:14.2px;line-height:18px;font-size:13px;color:#ffffff;transform:scaleX(0.9590);">Tell me</span>
<span class="t" style="left:843.5px;top:14.2px;line-height:18px;font-size:13px;color:#ffffff;transform:scaleX(0.8645);">Share</span>
<span class="t" style="left:11px;top:79.2px;line-height:17px;font-size:12.5px;color:#262626;transform:scaleX(0.9818);">Navigation</span>
<span class="t" style="left:103px;top:44.7px;line-height:17px;font-size:12.5px;color:#262626;transform:scaleX(0.9420);">Reading Layout</span>
<span class="t" style="left:103px;top:67.7px;line-height:17px;font-size:12.5px;color:#262626;transform:scaleX(0.8732);">Snap</span>
<span class="t" style="left:103px;top:90.7px;line-height:17px;font-size:12.5px;color:#262626;transform:scaleX(0.9686);">Show &amp; Hide</span>
<span class="t" style="left:94px;top:114.7px;line-height:17px;font-size:12.5px;color:#3a3a3a;transform:scaleX(0.9302);">View</span>
<span class="t" style="left:225px;top:79.2px;line-height:17px;font-size:12.5px;color:#262626;transform:scaleX(0.8957);">Range</span>
<span class="t" style="left:285px;top:44.7px;line-height:17px;font-size:12.5px;color:#262626;transform:scaleX(0.9753);">Drop-down List</span>
<span class="t" style="left:285px;top:67.7px;line-height:17px;font-size:12.5px;color:#262626;transform:scaleX(0.9440);">Prevent Typing</span>
<span class="t" style="left:285px;top:90.7px;line-height:17px;font-size:12.5px;color:#262626;transform:scaleX(0.9109);">Copy Ranges</span>
<span class="t" style="left:346px;top:114.7px;line-height:17px;font-size:12.5px;color:#3a3a3a;transform:scaleX(0.8937);">Ranges &amp; Cells</span>
<span class="t" style="left:393px;top:79.2px;line-height:17px;font-size:12.5px;color:#262626;transform:scaleX(0.9936);">Content</span>
<span class="t" style="left:461px;top:44.7px;line-height:17px;font-size:12.5px;color:#262626;transform:scaleX(0.9855);">To Actual</span>
<span class="t" style="left:461px;top:67.7px;line-height:17px;font-size:12.5px;color:#262626;transform:scaleX(0.9500);">Round</span>
<span class="t" style="left:461px;top:90.7px;line-height:17px;font-size:12.5px;color:#262626;transform:scaleX(0.9729);">Merge &amp; Split</span>
<span class="t" style="left:565px;top:77.2px;line-height:17px;font-size:12.5px;color:#262626;transform:scaleX(0.9677);">Editing</span>
<span class="t" style="left:619px;top:77.2px;line-height:17px;font-size:12.5px;color:#262626;transform:scaleX(0.9707);">Formula</span>
<span class="t" style="left:690px;top:79.2px;line-height:17px;font-size:12.5px;color:#262626;transform:scaleX(0.9419);">Re-run</span>
<span class="t" style="left:682.5px;top:94.7px;line-height:17px;font-size:12.5px;color:#262626;transform:scaleX(0.9921);">last utility</span>
<span class="t" style="left:692px;top:114.7px;line-height:17px;font-size:12.5px;color:#3a3a3a;transform:scaleX(0.8958);">Rerun</span>
<span class="t" style="left:758px;top:77.2px;line-height:17px;font-size:12.5px;color:#262626;transform:scaleX(0.9526);">Help</span>
<span class="t" style="left:13px;top:146.2px;line-height:18px;font-size:13px;color:#333;transform:scaleX(1.0059);">A1</span>
<span class="t" style="left:42.5px;top:179.2px;line-height:18px;font-size:13px;color:#3b9a6d;font-weight:bold;transform:scaleX(1.0100);">Workbook &amp; Sheet</span>
<span class="t" style="left:51px;top:235.7px;line-height:16px;font-size:11.5px;color:#2b2b2b;font-weight:bold;transform:scaleX(0.9589);">KTE-formulas.xlsm</span>
<span class="t" style="left:64.5px;top:347.7px;line-height:16px;font-size:12px;color:#1a1a1a;transform:scaleX(0.9333);">Filter:</span>
<span class="t" style="left:60px;top:370.7px;line-height:16px;font-size:11.5px;color:#2b2b2b;transform:scaleX(1.0483);">Index</span>
<span class="t" style="left:60px;top:389.7px;line-height:16px;font-size:11.5px;color:#2b2b2b;transform:scaleX(0.9472);">RUBYMIEMIE</span>
<span class="t" style="left:60px;top:408.7px;line-height:16px;font-size:11.5px;color:#2b2b2b;transform:scaleX(0.9729);">reverse names</span>
<span class="t" style="left:60px;top:427.7px;line-height:16px;font-size:11.5px;color:#2b2b2b;transform:scaleX(1.0064);">extract each names</span>
<span class="t" style="left:60px;top:446.7px;line-height:16px;font-size:11.5px;color:#2b2b2b;transform:scaleX(1.0119);">remove chars</span>
<span class="t" style="left:60px;top:465.7px;line-height:16px;font-size:11.5px;color:#2b2b2b;transform:scaleX(1.0513);">reformat phnoe</span>
<span class="t" style="left:60px;top:484.7px;line-height:16px;font-size:11.5px;color:#2b2b2b;transform:scaleX(0.9601);">Sheet5</span>
<span class="t" style="left:60px;top:503.7px;line-height:16px;font-size:11.5px;color:#2b2b2b;transform:scaleX(0.9601);">Sheet6</span>
<span class="t" style="left:60px;top:522.7px;line-height:16px;font-size:11.5px;color:#2b2b2b;transform:scaleX(0.9956);">my sheet names</span>
<span class="t" style="left:60px;top:541.7px;line-height:16px;font-size:11.5px;color:#2b2b2b;transform:scaleX(0.9601);">Sheet1</span>
<span class="t" style="left:60px;top:560.7px;line-height:16px;font-size:11.5px;color:#2b2b2b;transform:scaleX(0.9601);">Sheet2</span>
<span class="t" style="left:60px;top:579.7px;line-height:16px;font-size:11.5px;color:#2b2b2b;transform:scaleX(0.9601);">Sheet3</span>
<span class="t" style="left:60px;top:598.7px;line-height:16px;font-size:11.5px;color:#2b2b2b;font-weight:bold;transform:scaleX(1.0075);">Sheet4</span>
<span class="t" style="left:48px;top:624.7px;line-height:16px;font-size:11.5px;color:#1a1a1a;transform:scaleX(0.9384);">Sheets: 13</span>
<span class="t" style="left:107px;top:624.7px;line-height:16px;font-size:11.5px;color:#1a1a1a;transform:scaleX(1.0151);">[Visible: 13 - Hidden: 0]</span>
<span class="t" style="left:427.5px;top:178.2px;line-height:18px;font-size:13px;color:#217346;transform:scaleX(0.9225);">A</span>
<span class="t" style="left:491.5px;top:178.2px;line-height:18px;font-size:13px;color:#444;transform:scaleX(0.9225);">B</span>
<span class="t" style="left:555.5px;top:178.2px;line-height:18px;font-size:13px;color:#444;transform:scaleX(0.8519);">C</span>
<span class="t" style="left:619.5px;top:178.2px;line-height:18px;font-size:13px;color:#444;transform:scaleX(0.8519);">D</span>
<span class="t" style="left:683.5px;top:178.2px;line-height:18px;font-size:13px;color:#444;transform:scaleX(0.9225);">E</span>
<span class="t" style="left:747.5px;top:178.2px;line-height:18px;font-size:13px;color:#444;transform:scaleX(1.0059);">F</span>
<span class="t" style="left:811.5px;top:178.2px;line-height:18px;font-size:13px;color:#444;transform:scaleX(0.7901);">G</span>
<span class="t" style="left:383.0px;top:199.2px;line-height:18px;font-size:13px;color:#217346;transform:scaleX(0.9676);">1</span>
<span class="t" style="left:383.0px;top:219.2px;line-height:18px;font-size:13px;color:#333;transform:scaleX(0.9676);">2</span>
<span class="t" style="left:383.0px;top:239.2px;line-height:18px;font-size:13px;color:#333;transform:scaleX(0.9676);">3</span>
<span class="t" style="left:383.0px;top:259.2px;line-height:18px;font-size:13px;color:#333;transform:scaleX(0.9676);">4</span>
<span class="t" style="left:383.0px;top:279.2px;line-height:18px;font-size:13px;color:#333;transform:scaleX(0.9676);">5</span>
<span class="t" style="left:383.0px;top:299.2px;line-height:18px;font-size:13px;color:#333;transform:scaleX(0.9676);">6</span>
<span class="t" style="left:383.0px;top:319.2px;line-height:18px;font-size:13px;color:#333;transform:scaleX(0.9676);">7</span>
<span class="t" style="left:383.0px;top:339.2px;line-height:18px;font-size:13px;color:#333;transform:scaleX(0.9676);">8</span>
<span class="t" style="left:383.0px;top:359.2px;line-height:18px;font-size:13px;color:#333;transform:scaleX(0.9676);">9</span>
<span class="t" style="left:379.5px;top:379.2px;line-height:18px;font-size:13px;color:#333;transform:scaleX(0.9676);">10</span>
<span class="t" style="left:379.5px;top:399.2px;line-height:18px;font-size:13px;color:#333;transform:scaleX(1.0370);">11</span>
<span class="t" style="left:379.5px;top:419.2px;line-height:18px;font-size:13px;color:#333;transform:scaleX(0.9676);">12</span>
<span class="t" style="left:379.5px;top:439.2px;line-height:18px;font-size:13px;color:#333;transform:scaleX(0.9676);">13</span>
<span class="t" style="left:379.5px;top:519.2px;line-height:18px;font-size:13px;color:#333;transform:scaleX(0.9676);">17</span>
<span class="t" style="left:379.5px;top:539.2px;line-height:18px;font-size:13px;color:#333;transform:scaleX(0.9676);">18</span>
<span class="t" style="left:379.5px;top:559.2px;line-height:18px;font-size:13px;color:#333;transform:scaleX(0.9676);">19</span>
<span class="t" style="left:379.5px;top:579.2px;line-height:18px;font-size:13px;color:#333;transform:scaleX(0.9676);">20</span>
<span class="t" style="left:379.5px;top:599.2px;line-height:18px;font-size:13px;color:#333;transform:scaleX(0.9676);">21</span>
<span class="t" style="left:396px;top:458.4px;line-height:27px;font-size:21px;color:#b5460f;font-weight:bold;transform:scaleX(0.9593);">All worksheets are listed here,</span>
<span class="t" style="left:396px;top:478.5px;line-height:27px;font-size:21px;color:#b5460f;font-weight:bold;transform:scaleX(0.9585);">click to go any sheet</span>
<span class="t" style="left:487.5px;top:632.9px;line-height:18px;font-size:13px;color:#444;transform:scaleX(0.9711);">reverse names</span>
<span class="t" style="left:601px;top:632.9px;line-height:18px;font-size:13px;color:#444;transform:scaleX(0.9740);">extract each names</span>
</div>
</body></html>
